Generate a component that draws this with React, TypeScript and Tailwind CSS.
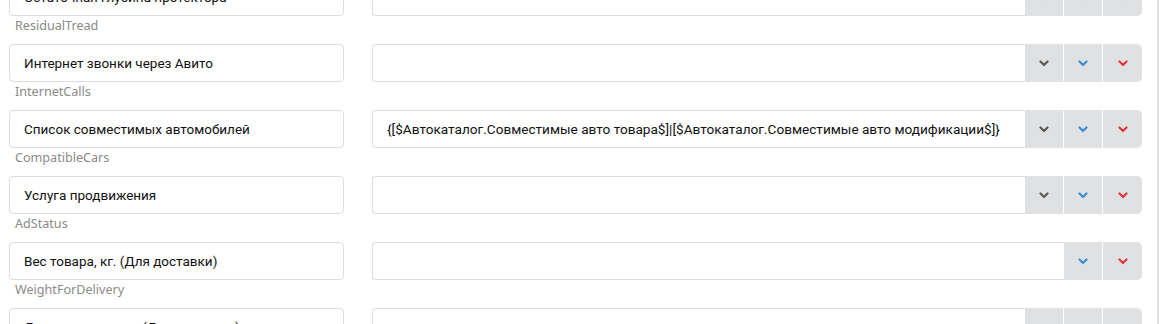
import React from "react";

type Row = {
  title: string;
  name: string;
  value?: string;
  noDefault?: boolean;
};

const ROWS: Row[] = [
  { title: "Остаточная глубина протектора", name: "ResidualTread" },
  { title: "Интернет звонки через Авито", name: "InternetCalls" },
  {
    title: "Список совместимых автомобилей",
    name: "CompatibleCars",
    value: "{[$Автокаталог.Совместимые авто товара$]|[$Автокаталог.Совместимые авто модификации$]}",
  },
  { title: "Услуга продвижения", name: "AdStatus" },
  { title: "Вес товара, кг. (Для доставки)", name: "WeightForDelivery", noDefault: true },
  { title: "Длина товара, см. (Для доставки)", name: "LengthForDelivery" },
];

function Chevron({ color }: { color: string }) {
  return (
    <svg width="10" height="7" viewBox="0 0 10 7" fill="none">
      <path d="M1.5 1.5 L5 5 L8.5 1.5" stroke={color} strokeWidth="2.2" strokeLinecap="round" strokeLinejoin="round" />
    </svg>
  );
}

function Btn({ color, last }: { color: string; last?: boolean }) {
  return (
    <button
      className={`flex h-full w-[39px] shrink-0 items-center justify-center bg-[#e0e1e3] ${
        last ? "rounded-r-[5px]" : "border-r border-white"
      }`}
    >
      <Chevron color={color} />
    </button>
  );
}

function FieldRow({ row }: { row: Row }) {
  return (
    <div className="flex h-[66px] items-start">
      <div className="w-[335px] shrink-0">
        <div className="flex h-[38px] items-center rounded-[4px] border border-[#dcdcdc] bg-white px-[14px] text-[13.5px] text-[#111] [font-family:Roboto,sans-serif]">
          {row.title}
        </div>
        <div className="pl-[6px] text-[12.6px] leading-[20px] text-[#8a8a8a] [font-family:'Noto_Sans',sans-serif]">
          {row.name}
        </div>
      </div>
      <div className="ml-[28px] flex h-[38px] w-[770px] shrink-0">
        <div className="flex min-w-0 flex-1 items-center rounded-l-[4px] border border-r-0 border-[#dcdcdc] bg-white px-[14px] text-[13.6px] text-[#111] [font-family:Roboto,sans-serif] whitespace-nowrap">
          {row.value}
        </div>
        {!row.noDefault && <Btn color="#5b5b5b" />}
        <Btn color="#3a8fd7" />
        <Btn color="#e2363a" last />
      </div>
    </div>
  );
}

export default function App() {
  return (
    <div className="flex h-[324px] w-[1171px] overflow-hidden bg-white">
      <div className="w-[1157px] shrink-0 pl-[9px]">
        <div className="-mt-[22px]">
          {ROWS.map((r) => (
            <FieldRow key={r.name} row={r} />
          ))}
        </div>
      </div>
      <div className="h-full w-[2px] bg-[#e3e3e3]" />
    </div>
  );
}
